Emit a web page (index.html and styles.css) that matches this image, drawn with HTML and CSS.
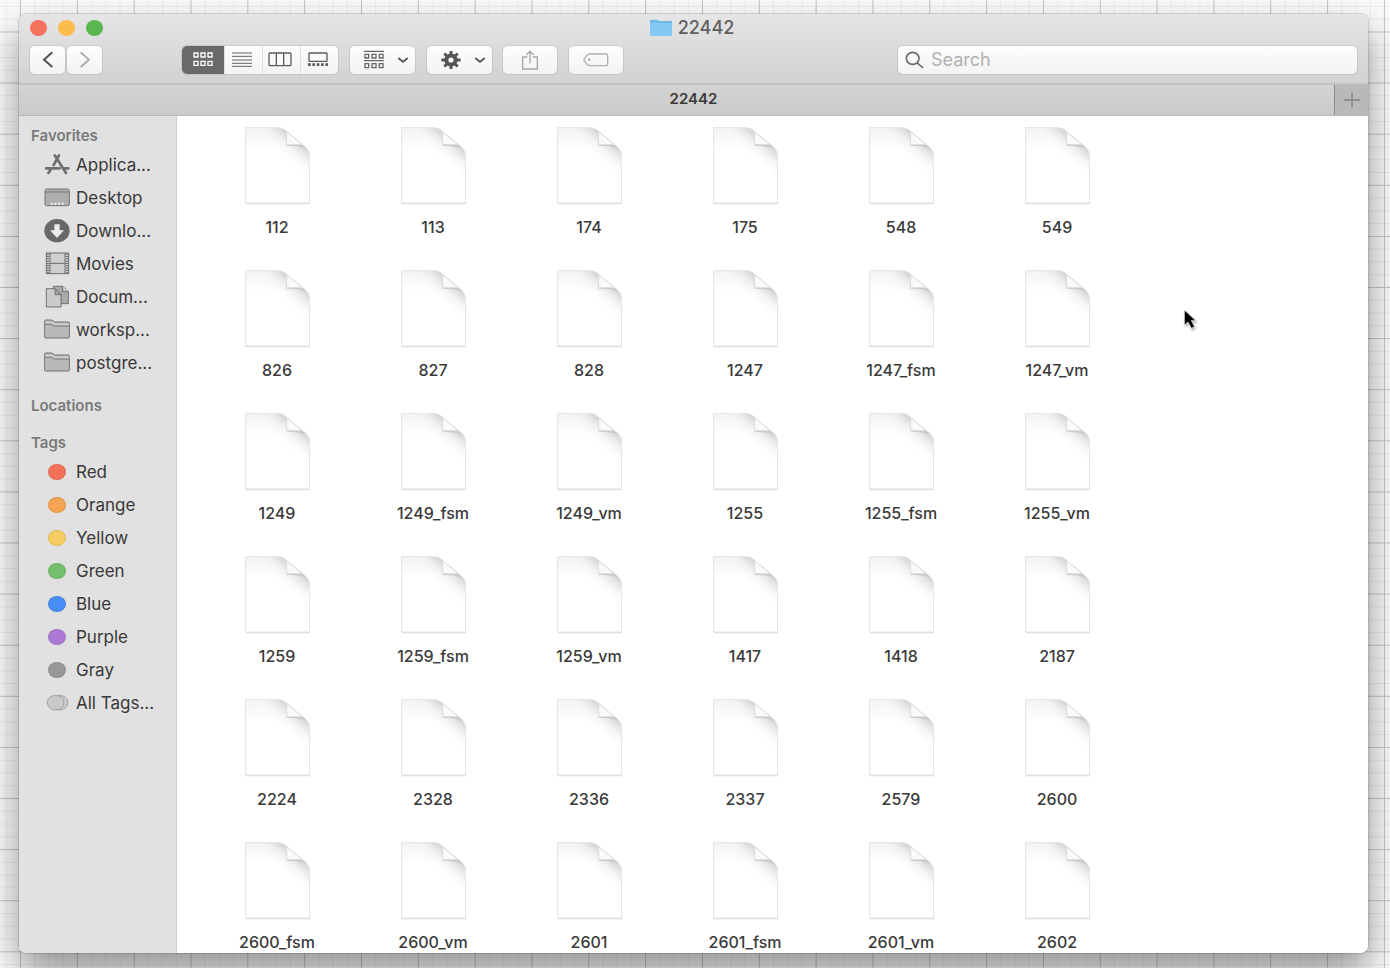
FILE: index.html
```
<!DOCTYPE html>
<html lang="en">
<head>
<meta charset="utf-8">
<title>22442</title>
<link rel="stylesheet" href="styles.css">
</head>
<body>
<svg class="paper" aria-hidden="true">
  <defs>
    <pattern id="grid" x="20" y="31.5" width="56.83" height="51.1" patternUnits="userSpaceOnUse">
      <path d="M14.7 0V52M28.9 0V52M43.1 0V52M0 13.3H57M0 26H57M0 38.8H57" stroke="#ececec" stroke-width="1"/>
      <path d="M.5 0V52M0 .5H57" stroke="#c4c4c4" stroke-width="1"/>
    </pattern>
  </defs>
  <rect width="100%" height="100%" fill="url(#grid)"/>
</svg>
<svg class="defs" aria-hidden="true">
  <defs>
    <linearGradient id="topshade" x1="0" y1="0" x2="0" y2="1"><stop offset="0" stop-color="#f3f3f3"/><stop offset=".28" stop-color="#fff"/></linearGradient>
    <linearGradient id="foldshade" x1="158" y1="38" x2="112" y2="92" gradientUnits="userSpaceOnUse"><stop offset="0" stop-color="#cfcfcf"/><stop offset=".4" stop-color="#ececec" stop-opacity=".8"/><stop offset="1" stop-color="#fff" stop-opacity="0"/></linearGradient>
    <symbol id="file" viewBox="-3 0 198 234">
      <path d="M2 230H194" stroke="#dadada" stroke-width="4"/>
      <path d="M2 2H98C114 2 120 8 130 18L178 57C190 67 194 76 194 92V228H2Z" fill="url(#topshade)"/>
      <path d="M2 2H98C114 2 120 8 130 18L178 57C190 67 194 76 194 92V228H2Z" fill="url(#foldshade)" stroke="#e3e3e3" stroke-width="3"/>
      <path d="M125 53H172L184 65Q160 56 125 56Z" fill="#c9c9c9"/>
      <path d="M125 14V53H172Z" fill="#fafafa" stroke="#dcdcdc" stroke-width="3"/>
    </symbol>
    <symbol id="folder" viewBox="0 0 78 72">
      <path d="M2 57V9Q2 6 5 6H24L31 12H73Q76 12 76 15V57Q76 60 73 60H5Q2 60 2 57Z" fill="#b9b9b9" stroke="#717171" stroke-width="3"/>
      <path d="M4 14H26L32 19H74" fill="none" stroke="#d2d2d2" stroke-width="5"/>
      <path d="M3 19H24L30 24H75" fill="none" stroke="#777" stroke-width="3"/>
    </symbol>
    <symbol id="chevron" viewBox="0 0 36 24"><path d="M4 6L18 18L32 6" fill="none" stroke="#4d4d4d" stroke-width="5"/></symbol>
  </defs>
</svg>

<main class="window">
  <header class="chrome">
    <div class="titlebar">
      <div class="lights">
        <button class="light close" aria-label="Close"></button>
        <button class="light minimize" aria-label="Minimize"></button>
        <button class="light expand" aria-label="Zoom"></button>
      </div>
      <h1 class="title">
        <svg width="22" height="18" viewBox="0 0 66 54" aria-hidden="true"><path d="M0 5Q0 2 3 2H19Q22 2 25 6H63Q66 6 66 9V47Q66 50 63 50H3Q0 50 0 47Z" fill="#6fb9e8"/><path d="M0 12H66V46Q66 49 63 49H3Q0 49 0 46Z" fill="#82c9f6"/></svg>
        22442
      </h1>
    </div>
    <div class="toolbar">
      <div class="history">
        <button class="tool nav" aria-label="Back"><svg width="12" height="17" viewBox="0 0 36 51"><path d="M31 4L6 26L31 48" fill="none" stroke="#505050" stroke-width="6"/></svg></button>
        <button class="tool nav" aria-label="Forward"><svg width="12" height="17" viewBox="0 0 36 51"><path d="M5 4L30 26L5 48" fill="none" stroke="#a6a6a6" stroke-width="5"/></svg></button>
      </div>
      <div class="views">
        <button class="seg active" aria-label="Icon view"><svg width="20" height="15" viewBox="0 0 60 45" fill="none" stroke="#fff" stroke-width="4"><path d="M3 3H15V15H3ZM24 3H36V15H24ZM45 3H57V15H45ZM3 28H15V40H3ZM24 28H36V40H24ZM45 28H57V40H45Z"/></svg></button>
        <button class="seg" aria-label="List view"><svg width="20" height="15" viewBox="0 0 60 45"><path d="M0 3H60M0 13H60M0 24H60M0 34H60M0 43H60" stroke="#666" stroke-width="3"/></svg></button>
        <button class="seg" aria-label="Column view"><svg width="24" height="15" viewBox="0 0 72 45" fill="none" stroke="#5c5c5c" stroke-width="4"><rect x="3" y="3" width="66" height="38" rx="3"/><path d="M25 3V41M47 3V41"/></svg></button>
        <button class="seg" aria-label="Gallery view"><svg width="20" height="15" viewBox="0 0 60 45" fill="none" stroke="#5c5c5c" stroke-width="4"><rect x="3" y="3" width="54" height="25" rx="2"/><path d="M0 38H60" stroke-width="8" stroke-dasharray="8 5"/></svg></button>
      </div>
      <button class="tool menu" aria-label="Arrange"><svg width="20" height="19" viewBox="0 0 60 57" fill="none" stroke="#666" stroke-width="4"><path d="M0 4H60M0 32H60"/><path d="M3 13H14V24H3ZM24 13H36V24H24ZM46 13H57V24H46ZM3 41H14V53H3ZM24 41H36V53H24ZM46 41H57V53H46Z"/></svg><svg width="12" height="8"><use href="#chevron"/></svg></button>
      <button class="tool menu action" aria-label="Action"><svg width="20" height="18" viewBox="-30 -28 60 56" preserveAspectRatio="none" fill="none" stroke="#555"><circle r="14" stroke-width="12"/><path d="M0 -28V-16M0 16V28M-29 0H-16M16 0H29M-20 -20L-12 -12M20 -20L12 -12M-20 20L-12 12M20 20L12 12" stroke-width="9"/></svg><svg width="12" height="8"><use href="#chevron"/></svg></button>
      <button class="tool solo" aria-label="Share"><svg width="18" height="20" viewBox="0 0 54 60" fill="none" stroke="#a8a8a8" stroke-width="4"><path d="M19 21H5V57H49V21H35M27 40V4M16 14L27 4L38 14"/></svg></button>
      <button class="tool solo tag" aria-label="Edit tags"><svg width="26" height="14" viewBox="0 0 78 42" fill="none" stroke="#b0b0b0" stroke-width="4"><path d="M20 3H69Q74 3 74 8V33Q74 38 69 38H20Q16 38 12 34L5 25Q1 20 5 16L12 7Q16 3 20 3Z"/><circle cx="19" cy="20" r="2"/></svg></button>
      <label class="search">
        <svg width="19" height="18" viewBox="0 0 57 54" fill="none" stroke="#6b6b6b" stroke-width="5"><ellipse cx="23" cy="22" rx="19" ry="18"/><path d="M36 35L54 51"/></svg>
        <input type="search" placeholder="Search" aria-label="Search">
      </label>
    </div>
    <div class="tabs">
      <div class="tab">22442</div>
      <button class="newtab" aria-label="New tab"><svg width="16" height="14" viewBox="0 0 48 42"><path d="M0 21H48M24 0V42" stroke="#838383" stroke-width="4"/></svg></button>
    </div>
  </header>
  <div class="body">
    <nav class="sidebar">
      <h2>Favorites</h2>
      <ul>
        <li><a href="#"><svg viewBox="0 0 78 72" fill="none" stroke="#707070" stroke-width="8" stroke-linecap="round"><path d="M6 46H47M63 46H73M45 7L29 36M20 50L13 60M32 7L66 60" /></svg><span>Applica...</span></a></li>
        <li><a href="#"><svg viewBox="0 0 78 72"><rect x="3" y="9" width="73" height="50" rx="5" fill="#aeaeae" stroke="#737373" stroke-width="3"/><path d="M4 18H75" stroke="#777" stroke-width="3"/><path d="M20 53H60" stroke="#f3f3f3" stroke-width="6" stroke-dasharray="6 5"/></svg><span>Desktop</span></a></li>
        <li><a href="#"><svg viewBox="0 0 78 72"><ellipse cx="39" cy="35" rx="38" ry="35" fill="#686868"/><path d="M31 16H47V34H60L39 57L18 34H31Z" fill="#ececec"/></svg><span>Downlo...</span></a></li>
        <li><a href="#"><svg viewBox="0 0 78 72"><rect x="7" y="3" width="67" height="62" fill="#cfcfcf" stroke="#6d6d6d" stroke-width="3"/><path d="M18 3V65M63 3V65M18 34H63" stroke="#6d6d6d" stroke-width="3"/><path d="M12 5V64M69 5V64" stroke="#6d6d6d" stroke-width="7" stroke-dasharray="3 4"/></svg><span>Movies</span></a></li>
        <li><a href="#"><svg viewBox="0 0 78 72" stroke="#717171" stroke-width="3"><path d="M28 4H56L73 20V56H28Z" fill="#aaa"/><path d="M56 4V20H73" fill="#ccc"/><path d="M7 11H33L51 29V66H7Z" fill="#cbcbcb"/><path d="M33 11V29H51Z" fill="#a8a8a8"/></svg><span>Docum...</span></a></li>
        <li><a href="#"><svg><use href="#folder"/></svg><span>worksp...</span></a></li>
        <li><a href="#"><svg><use href="#folder"/></svg><span>postgre...</span></a></li>
      </ul>
      <h2>Locations</h2>
      <h2>Tags</h2>
      <ul>
        <li><a href="#"><i class="dot red"></i><span>Red</span></a></li>
        <li><a href="#"><i class="dot orange"></i><span>Orange</span></a></li>
        <li><a href="#"><i class="dot yellow"></i><span>Yellow</span></a></li>
        <li><a href="#"><i class="dot green"></i><span>Green</span></a></li>
        <li><a href="#"><i class="dot blue"></i><span>Blue</span></a></li>
        <li><a href="#"><i class="dot purple"></i><span>Purple</span></a></li>
        <li><a href="#"><i class="dot gray"></i><span>Gray</span></a></li>
        <li><a href="#"><svg viewBox="0 0 78 72" fill="#cacaca" stroke="#a3a3a3" stroke-width="3"><ellipse cx="47" cy="35" rx="25" ry="22"/><ellipse cx="35" cy="35" rx="25" ry="22"/></svg><span>All Tags...</span></a></li>
      </ul>
    </nav>
    <section class="files" aria-label="Files">
      <ul class="icons">
        <li><svg><use href="#file"/></svg><span>112</span></li>
        <li><svg><use href="#file"/></svg><span>113</span></li>
        <li><svg><use href="#file"/></svg><span>174</span></li>
        <li><svg><use href="#file"/></svg><span>175</span></li>
        <li><svg><use href="#file"/></svg><span>548</span></li>
        <li><svg><use href="#file"/></svg><span>549</span></li>
        <li><svg><use href="#file"/></svg><span>826</span></li>
        <li><svg><use href="#file"/></svg><span>827</span></li>
        <li><svg><use href="#file"/></svg><span>828</span></li>
        <li><svg><use href="#file"/></svg><span>1247</span></li>
        <li><svg><use href="#file"/></svg><span>1247_fsm</span></li>
        <li><svg><use href="#file"/></svg><span>1247_vm</span></li>
        <li><svg><use href="#file"/></svg><span>1249</span></li>
        <li><svg><use href="#file"/></svg><span>1249_fsm</span></li>
        <li><svg><use href="#file"/></svg><span>1249_vm</span></li>
        <li><svg><use href="#file"/></svg><span>1255</span></li>
        <li><svg><use href="#file"/></svg><span>1255_fsm</span></li>
        <li><svg><use href="#file"/></svg><span>1255_vm</span></li>
        <li><svg><use href="#file"/></svg><span>1259</span></li>
        <li><svg><use href="#file"/></svg><span>1259_fsm</span></li>
        <li><svg><use href="#file"/></svg><span>1259_vm</span></li>
        <li><svg><use href="#file"/></svg><span>1417</span></li>
        <li><svg><use href="#file"/></svg><span>1418</span></li>
        <li><svg><use href="#file"/></svg><span>2187</span></li>
        <li><svg><use href="#file"/></svg><span>2224</span></li>
        <li><svg><use href="#file"/></svg><span>2328</span></li>
        <li><svg><use href="#file"/></svg><span>2336</span></li>
        <li><svg><use href="#file"/></svg><span>2337</span></li>
        <li><svg><use href="#file"/></svg><span>2579</span></li>
        <li><svg><use href="#file"/></svg><span>2600</span></li>
        <li><svg><use href="#file"/></svg><span>2600_fsm</span></li>
        <li><svg><use href="#file"/></svg><span>2600_vm</span></li>
        <li><svg><use href="#file"/></svg><span>2601</span></li>
        <li><svg><use href="#file"/></svg><span>2601_fsm</span></li>
        <li><svg><use href="#file"/></svg><span>2601_vm</span></li>
        <li><svg><use href="#file"/></svg><span>2602</span></li>
      </ul>
    </section>
  </div>
</main>
<svg class="cursor" width="16" height="24" viewBox="0 0 48 72" aria-hidden="true"><path d="M4 3V49L15 39L25 58L35 53L25 35H39Z" fill="#000" stroke="#fff" stroke-width="2"/></svg>
</body>
</html>
```
FILE: styles.css
```
* { box-sizing: border-box; }

body {
  margin: 0;
  height: 100vh;
  padding: 14px 22px 15px 19px;
  background: #fafafa;
  color: #3a3a3a;
  font-family: Inter, "Liberation Sans", sans-serif;
  font-size: 17px;
  overflow: hidden;
}

button, input { font: inherit; border: 0; padding: 0; }
ul { list-style: none; margin: 0; padding: 0; }
svg { display: block; flex: none; }

.paper { position: absolute; inset: 0; width: 100%; height: 100%; }
.defs { position: absolute; width: 0; height: 0; }

.window {
  position: relative;
  height: 100%;
  display: flex;
  flex-direction: column;
  border-radius: 7px;
  overflow: hidden;
  background: #fff;
  box-shadow: 0 0 0 1px rgba(0, 0, 0, .12), 0 18px 36px rgba(0, 0, 0, .42);
}

.chrome { background: linear-gradient(#e5e5e5, #d2d2d2 69px); }

.titlebar {
  display: grid;
  grid-template-columns: 1fr auto 1fr;
  align-items: center;
  height: 28px;
  margin-bottom: 3px;
  padding: 0 14px 0 11px;
}

.lights { display: flex; gap: 11px; }
.light { width: 17px; height: 16px; border-radius: 50%; }
.close { background: #f5725f; }
.minimize { background: #fbbc4b; }
.expand { background: #58b74f; }

.title {
  display: flex;
  align-items: center;
  gap: 6px;
  margin: 0;
  font-size: 18px;
  font-weight: 500;
  line-height: 24px;
  color: #5f5f5f;
}

.toolbar {
  display: flex;
  align-items: center;
  height: 38px;
  padding: 0 11px 9px;
}

.tool, .seg, .search {
  display: flex;
  align-items: center;
  justify-content: center;
  height: 28px;
  background: linear-gradient(#fdfdfd, #f3f3f3);
}

.tool, .views, .search { border-radius: 5px; box-shadow: 0 0 1px 1px rgba(0, 0, 0, .08); }

.history { display: flex; gap: 2px; margin-right: 80px; }
.nav { width: 35px; }

.views { display: flex; overflow: hidden; margin-right: 12px; }
.seg { width: 38px; border-left: 1px solid #e0e0e0; padding-right: 3px; }
.seg.active { width: 42px; background: #696969; border: 0; padding: 0; }

.menu { width: 65px; gap: 13px; margin-right: 12px; padding-left: 7px; }
.action { margin-right: 11px; }
.solo { width: 54px; margin-right: 12px; }
.tag { margin-right: auto; }

.search {
  flex: 0 0 459px;
  justify-content: flex-start;
  gap: 7px;
  padding: 0 7px;
}

.search input {
  flex: 1;
  min-width: 0;
  background: none;
  outline: 0;
  font-size: 18px;
  line-height: 24px;
}

.search input::placeholder { color: #b0b0b0; opacity: 1; }

.tabs {
  display: flex;
  height: 33px;
  border-top: 2px solid #c2c2c2;
  border-bottom: 1px solid #b9b9b9;
  background: linear-gradient(#d3d3d3, #cacaca);
}

.tab {
  flex: 1;
  padding-left: 34px;
  font-size: 15px;
  font-weight: 600;
  line-height: 28px;
  text-align: center;
}

.newtab {
  display: grid;
  place-items: center;
  width: 34px;
  border-left: 1px solid #8c8c8c;
  background: #b9b9b9;
}

.body { flex: 1; min-height: 0; display: flex; }

.sidebar {
  flex: 0 0 158px;
  padding-top: 8px;
  border-right: 1px solid #cecece;
  background: #e1e1e1;
}

.sidebar h2 {
  margin: 0;
  padding-left: 12px;
  font-size: 15px;
  font-weight: 600;
  line-height: 23px;
  color: #7a7a7a;
}

.sidebar ul + h2 { margin: 15px 0 14px; }

.sidebar a {
  display: flex;
  align-items: center;
  gap: 6px;
  height: 33px;
  padding-left: 25px;
  color: #383838;
  text-decoration: none;
  white-space: nowrap;
}

.sidebar h2 + ul { padding-top: 1px; }
.sidebar svg { width: 26px; height: 24px; }

.dot {
  width: 18px;
  height: 16px;
  margin: 0 4px;
  border: 1px solid rgba(0, 0, 0, .08);
  border-radius: 50%;
}
.red { background: #f5725a; }
.orange { background: #f4a453; }
.yellow { background: #f6cd60; }
.green { background: #74bf6d; }
.blue { background: #4a8ef5; }
.purple { background: #ac7ad4; }
.gray { background: #989898; }

.files { flex: 1; overflow: hidden; padding: 11px 0 0 22px; }

.icons { display: grid; grid-template-columns: repeat(6, 156px); grid-auto-rows: 143px; }
.icons li { display: flex; flex-direction: column; align-items: center; gap: 10px; }
.icons svg { width: 66px; height: 78px; }
.icons span { font-size: 16px; font-weight: 500; line-height: 24px; }

.cursor {
  position: absolute;
  left: 1183px;
  top: 309px;
  filter: drop-shadow(1px 2px 1px rgba(0, 0, 0, .3));
}
```
